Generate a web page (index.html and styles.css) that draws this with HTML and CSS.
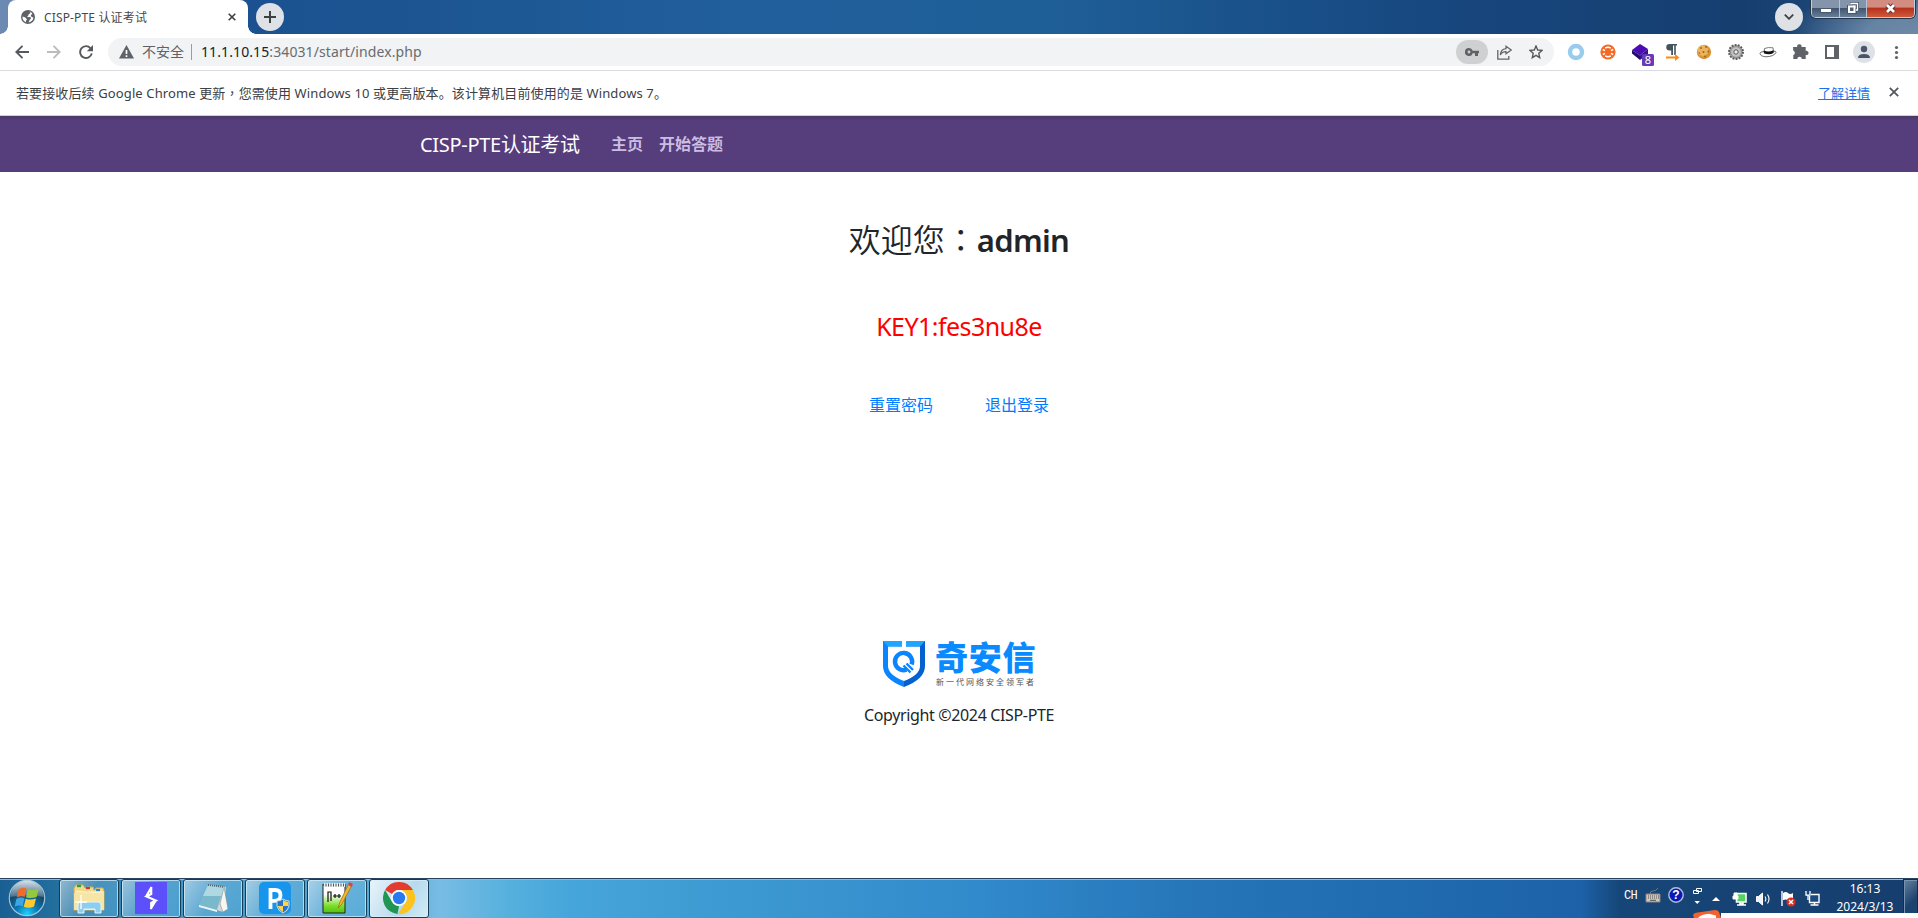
FILE: index.html
```
<!DOCTYPE html>
<html lang="zh-CN">
<head>
<meta charset="utf-8">
<title>CISP-PTE 认证考试</title>
<link rel="stylesheet" href="styles.css">
</head>
<body>
<div class="screen">
  <header class="titlebar">
    <div class="tab">
      <svg class="globe" width="14" height="14" viewBox="0 0 14 14"><circle cx="7" cy="7" r="7" fill="#5f6368"/><path d="M7.6 1.6 9.6 1.8 9 3.6 7.4 4.4 7.4 5.6 6 6.4 7.8 7.2 9.4 6.8 10 8.4 8.6 10 7.6 12.4A5.5 5.5 0 0 0 12.4 7.6L10.6 7 9.8 5.2 11.4 3.6A5.6 5.6 0 0 0 7.6 1.6Z" fill="#fff"/><path d="M1.5 6.6 4.4 7.6 6 9.4 5 10.6 5 12.2A5.6 5.6 0 0 1 1.5 6.6Z" fill="#fff"/></svg>
      <span class="tab-title">CISP-PTE 认证考试</span>
      <svg class="tab-close" width="8" height="8" viewBox="0 0 8 8"><path d="M.7.7 7.3 7.3M7.3.7.7 7.3" stroke="#3c4043" stroke-width="1.6"/></svg>
    </div>
    <div class="round-btn"><svg width="12" height="12" viewBox="0 0 12 12"><path d="M6 0V12M0 6H12" stroke="#3c4043" stroke-width="2"/></svg></div>
    <div class="round-btn search-tabs"><svg width="10" height="6" viewBox="0 0 10 6"><path d="M.8.6 5 4.8 9.2.6" fill="none" stroke="#3c4043" stroke-width="1.8"/></svg></div>
    <div class="win-buttons">
      <div class="win-btn"><svg width="12" height="5" viewBox="0 0 12 5"><rect x=".5" y=".5" width="11" height="4" fill="#fff" stroke="#4d5a6d"/></svg></div>
      <div class="win-btn restore"><svg width="12" height="12" viewBox="0 0 12 12"><path d="M4.5 1.5h6v6h-2v3h-7v-6h3Z" fill="none" stroke="#4a5568" stroke-width="3"/><path d="M4 2.5V1.5h6.5V8H9" fill="none" stroke="#fff" stroke-width="1.3"/><rect x="2" y="4.5" width="5.5" height="5.5" fill="#566276" stroke="#fff" stroke-width="2"/></svg></div>
      <div class="win-btn close"><svg width="13" height="11" viewBox="0 0 13 11"><path d="M3 2 10 9M10 2 3 9" stroke="#5b3338" stroke-width="4.6"/><path d="M3 2 10 9M10 2 3 9" stroke="#fff" stroke-width="2.8"/></svg></div>
    </div>
  </header>

  <div class="toolbar">
    <div class="nav-icons">
      <svg width="14" height="14" viewBox="0 0 14 14"><path d="M14 7H1.5M7.5 .8 1.3 7l6.2 6.2" fill="none" stroke="#55595e" stroke-width="1.9"/></svg>
      <svg width="14" height="14" viewBox="0 0 14 14"><path d="M0 7H12.5M6.5 .8 12.7 7l-6.2 6.2" fill="none" stroke="#babcbe" stroke-width="1.9"/></svg>
      <svg width="14" height="14" viewBox="0 0 14 14"><path d="M11.6 3.3A5.9 5.9 0 1 0 12.8 8.4" fill="none" stroke="#55595e" stroke-width="1.9"/><path d="M14 0V6.2H7.8Z" fill="#55595e"/></svg>
    </div>
    <div class="omnibox">
      <svg width="15" height="14" viewBox="0 0 15 14"><path d="M7.5 0 15 13.5H0Z" fill="#5f6368"/><path d="M7.5 5V9M7.5 10.2V12" stroke="#fff" stroke-width="1.7"/></svg>
      <span class="insecure">不安全</span>
      <i class="divider"></i>
      <span class="url"><b>11.1.10.15</b>:34031/start/index.php</span>
      <div class="omni-actions">
        <span class="key"><svg width="14" height="8" viewBox="0 0 14 8"><path d="M4 0A4 4 0 1 0 7.7 5.2H10V8H13V5.2H14V2.8H7.7A4 4 0 0 0 4 0ZM4 2.6A1.4 1.4 0 1 1 4 5.4 1.4 1.4 0 0 1 4 2.6Z" fill="#5f6368" fill-rule="evenodd"/></svg></span>
        <svg class="share" width="15" height="15" viewBox="0 0 15 15"><path d="M.8 5V14.2H11.8V11" fill="none" stroke="#62666b" stroke-width="1.3"/><path d="M9 1.2 14.2 5 9 8.8V6.6C6 6.5 4.5 7.8 3.3 10 3.5 6.6 5.6 4 9 3.6Z" fill="none" stroke="#62666b" stroke-width="1.2"/></svg>
        <svg class="star" width="14" height="14" viewBox="0 0 14 14"><path d="M7 1 8.7 5 13 5.4 9.8 8.3 10.7 12.7 7 10.4 3.3 12.7 4.2 8.3 1 5.4 5.3 5Z" fill="none" stroke="#55595e" stroke-width="1.4"/></svg>
      </div>
    </div>
    <div class="extensions">
      <svg viewBox="0 0 32 32"><circle cx="16" cy="16" r="6" fill="none" stroke="#99cbef" stroke-width="4.4"/></svg>
      <svg viewBox="0 0 32 32"><circle cx="16" cy="16" r="7.6" fill="#f46a25"/><g fill="none" stroke="#fff" stroke-width="1.5"><path d="M13.2 12.2Q16 10.5 18.8 12.2M13.2 19.8Q16 21.5 18.8 19.8"/><path d="m10.8 13.5 2.2 1.2M21.2 13.5 19 14.7M10.8 18.5l2.2-1.2M21.2 18.5 19 17.3"/></g></svg>
      <svg viewBox="0 0 32 32"><path d="M16 8 24 13 16 19.5 8 14Z" fill="#4b0db3"/><path d="M8 14 16 19.5V24L8 17.5Z" fill="#21106b"/><path d="M16 19.5 24 13v5l-8 6Z" fill="#35108b"/><rect x="18" y="18" width="12" height="12" rx="1.5" fill="#673ab7"/><text x="24" y="28" class="badge-text">8</text></svg>
      <svg viewBox="0 0 32 32"><path d="M13.5 8H21V9.5H19.8V19H18.2V9.5H17V19H15.2V14.5H13.5A3.25 3.25 0 0 1 13.5 8Z" fill="#44545c"/><path d="M10 21.5H20" stroke="#ff8a0c" stroke-width="2"/><path d="m19 18 4.5 3.5L19 25Z" fill="#ff8a0c"/></svg>
      <svg viewBox="0 0 32 32"><circle cx="16" cy="16" r="7.2" fill="#dc9438"/><circle cx="15" cy="14.5" r="5.4" fill="#edb45e"/><g fill="#9a5f25"><circle cx="13" cy="12" r=".9"/><circle cx="18" cy="11" r=".9"/><circle cx="20.3" cy="15.5" r=".9"/><circle cx="15.5" cy="16" r="1"/><circle cx="11.5" cy="17" r=".8"/><circle cx="17" cy="20.5" r=".9"/></g></svg>
      <svg viewBox="0 0 32 32"><circle cx="16" cy="16" r="7" fill="#aaa" stroke="#5c5c5c" stroke-width="2" stroke-dasharray="1.9 1.24"/><circle cx="16" cy="16" r="5.4" fill="#c4c4c4" stroke="#8b8b8b"/><circle cx="16" cy="16" r="2.2" fill="#eee" stroke="#555"/></svg>
      <svg viewBox="0 0 32 32"><path d="M8 17.5Q8 15.5 12 15.5L21 15Q24.5 15 24 16.5 22 20.5 14 20.8 8.5 20.5 8 17.5Z" fill="#fff" stroke="#444" stroke-width=".8"/><path d="M12 16 12.5 12.5Q16 11 21 11.8L21.6 16Q17 18.5 12 16Z" fill="#fff" stroke="#444" stroke-width=".7"/><path d="M12 14.5Q16.5 16.5 21.3 14.2L21.6 17Q17 19.5 11.8 17.3Z" fill="#111"/></svg>
      <svg viewBox="0 0 32 32"><path d="M9 11H13.2A2.2 2.2 0 1 1 17.5 11H21.7V14.8A2.2 2.2 0 1 1 21.7 19V23H17.8A2.2 2.2 0 0 0 13.3 23H9.3V19A2.2 2.2 0 0 0 9.3 14.8Z" fill="#5f6368"/></svg>
      <svg viewBox="0 0 32 32"><path d="M9 9H23V23H9ZM11 11V21H18V11Z" fill="#5f6368" fill-rule="evenodd"/></svg>
      <svg viewBox="0 0 32 32"><circle cx="16" cy="16" r="11" fill="#dee1e6"/><circle cx="16" cy="13" r="3.2" fill="#4b566a"/><path d="M10 22Q10 18 16 18T22 22Z" fill="#4b566a"/></svg>
      <svg viewBox="0 0 32 32"><g fill="#5f6368"><circle cx="16.5" cy="11.5" r="1.6"/><circle cx="16.5" cy="16.5" r="1.6"/><circle cx="16.5" cy="21.5" r="1.6"/></g></svg>
    </div>
  </div>

  <div class="infobar">
    <span class="info-text">若要接收后续 Google Chrome 更新<span class="mid" lang="zh-Hant">，</span>您需使用 Windows 10 或更高版本。该计算机目前使用的是 Windows 7。</span>
    <a class="info-link">了解详情</a>
    <svg width="10" height="10" viewBox="0 0 10 10"><path d="M.8.8 9.2 9.2M9.2.8.8 9.2" stroke="#55595e" stroke-width="1.8"/></svg>
  </div>

  <nav class="navbar">
    <a class="brand">CISP-PTE认证考试</a>
    <a class="nav-link">主页</a>
    <a class="nav-link">开始答题</a>
  </nav>

  <main class="page">
    <h2 class="welcome"><span>欢迎您<span class="mid" lang="zh-Hant">：</span></span><b>admin</b></h2>
    <p class="flag">KEY1:fes3nu8e</p>
    <div class="links"><a>重置密码</a><a>退出登录</a></div>
    <div class="logo">
      <svg width="42" height="46" viewBox="0 0 42 46"><path d="M0 0H19V5.5H5V25Q5 34 21 40V46Q0 38 0 25Z" fill="#0a84ff"/><path d="M42 0H23V5.5H37V25Q37 34 21 40V46Q42 38 42 25Z" fill="#0560d0"/><path d="M0 0H19V5.5H5ZM42 0H23V5.5H37Z" fill="#1ea5ff"/><path d="M23.5 28.6A8.6 8.6 0 1 1 28.6 23.5" fill="none" stroke="#0a84ff" stroke-width="4.4"/><path d="m23.5 22.5 6.5 6.5M20.5 24.5 27.5 31.5" stroke="#0a84ff" stroke-width="2.4"/></svg>
      <div class="logo-words"><span class="logo-name">奇安信</span><span class="logo-sub">新一代网络安全领军者</span></div>
    </div>
    <p class="copyright">Copyright ©2024 CISP-PTE</p>
  </main>

  <footer class="taskbar">
    <svg class="start" width="38" height="38" viewBox="0 0 38 38">
      <defs><radialGradient id="orb" cx=".5" cy=".95" r=".9"><stop offset="0" stop-color="#20d4ff"/><stop offset=".35" stop-color="#0878b5"/><stop offset=".7" stop-color="#174869"/><stop offset="1" stop-color="#5f7f96"/></radialGradient><linearGradient id="gloss" x2="0" y2="1"><stop stop-color="#d6e0e8"/><stop offset="1" stop-color="#87a1b4" stop-opacity=".45"/></linearGradient></defs>
      <circle cx="19" cy="19" r="17.7" fill="url(#orb)" stroke="#9cc3d6" stroke-width="1.2"/><path d="M2.5 18A16.5 16.5 0 0 1 35.5 18Q19 14 2.5 18Z" fill="url(#gloss)"/>
      <path d="M10.5 10.5Q14 7.5 18.5 9.5L16.8 17.7Q12.5 16.3 8.7 18.5Z" fill="#f16b2b"/><path d="M19.8 10.2Q24 12 30.7 9.8L28.7 18Q23 20 18 18.2Z" fill="#94c93d"/><path d="M8.3 20Q12.3 17.5 16.4 19.3L14.6 27.2Q10.5 25.5 6.7 27.7Z" fill="#3fa5e5"/><path d="M17.7 19.7Q22.5 21.5 28 19.6L26 27.6Q20.5 30 15.8 27.8Z" fill="#fdc92f"/></svg>
    <div class="task"><svg viewBox="0 0 32 32"><path d="M1 6 3 3H10L12 6H13L14 5H20L21 8H22L23 6H30L31 9V28H1Z" fill="#f2d98c" stroke="#d3ad4e"/><path d="M2 10H31M2 9 13 10 31 11" stroke="#fff4c9"/><path d="M4 4h4" stroke="#29a329" stroke-width="2.4"/><path d="M13 6h4" stroke="#d13b25" stroke-width="2.2"/><path d="M23 8h4" stroke="#2d83cf" stroke-width="2.2"/><path d="M1 11H31V28H1Z" fill="#f7e5a5"/><path d="M5 31V23Q5 20 8 20H25Q28 20 28 23V31H22V27H11V31Z" fill="#8fcdee" stroke="#e1f5fd"/><path d="M8 13v14M2 20h12" stroke="#fff" stroke-width="1.3"/></svg></div>
    <div class="task"><svg viewBox="0 0 32 32"><path d="M0 0H32V32H0Z" fill="#5c50fa"/><path d="M16.2 5V12L11.5 14.5 20.8 18.5 16.2 21V27M16.6 5 11.2 14.2M20.8 18.4 15.6 27" fill="none" stroke="#fff" stroke-width="2.2"/></svg></div>
    <div class="task"><svg viewBox="0 0 32 32"><path d="M12 3 29 5 26 30 20 28Z" fill="#d4d8d8"/><path d="m27 5 4 22-5 3-3-8Z" fill="#f7f7f2" stroke="#888" stroke-width=".6"/><path d="M11 3 27 5 20 28 2 23Z" fill="#7ab9cc"/><path d="M11 3 27 5 24 14 6 14Z" fill="#aed8e2"/><path d="m2 23 18 5v2L2 25Z" fill="#eff5f6"/><path d="M11 3 27 5" stroke="#56656b" stroke-width="2" stroke-dasharray="1 1"/></svg></div>
    <div class="task"><svg viewBox="0 0 32 32"><rect width="32" height="32" rx="5" fill="#1795ec"/><path d="M11.5 27V8H16Q21.5 8 21.5 13.2T16 18.8H11.5" fill="none" stroke="#fff" stroke-width="3.8"/><path d="M24 17Q27 19 30 19V24Q29 29 24 31 19 29 18 24V19Q21 19 24 17Z" fill="#2276cc" stroke="#ddd"/><path d="M24 18Q27 20 29.3 20V24H24ZM18.7 24H24V30Q20 28 18.7 24Z" fill="#ffd34b"/></svg></div>
    <div class="task"><svg viewBox="0 0 32 32"><defs><linearGradient id="leaf" x2="0" y2="1"><stop offset=".35" stop-color="#fff"/><stop offset=".75" stop-color="#7bdf29"/><stop offset="1" stop-color="#54bf12"/></linearGradient></defs><path d="M2 2H24V31H2Z" fill="url(#leaf)" stroke="#222"/><path d="M2 3H24" stroke="#eee" stroke-width="4"/><path d="M2 3H24" stroke="#555" stroke-width="3" stroke-dasharray="1 1.5"/><path d="M7 20V10h3v9M12 14h4M14 12v4M16 14h4M18 12v4" fill="none" stroke="#111" stroke-width="1.2"/><path d="m17 26 2-6 9-19 3 2-10 19Z" fill="#f2b531" stroke="#a3661a" stroke-width=".7"/><path d="m27 3 1.5-3L32 2l-1.5 3Z" fill="#c64b61"/></svg></div>
    <div class="task active"><svg viewBox="0 0 32 32"><path d="M2.14 8A16 16 0 0 1 29.86 8H16A8 8 0 0 0 9.07 12Z" fill="#e33b2e"/><path d="M2.14 8 9.07 20A8 8 0 0 0 16 24L14.5 32A16 16 0 0 1 2.14 8Z" fill="#219653"/><path d="M29.86 8A16 16 0 0 1 15 32L22.93 20A8 8 0 0 0 16 8Z" fill="#fcc31e"/><circle cx="16" cy="16" r="7.9" fill="#fff"/><circle cx="16" cy="16" r="6.2" fill="#2b79ee"/></svg></div>
    <div class="tray">
      <span class="lang">CH</span>
      <svg class="ic-kb" width="16" height="15" viewBox="0 0 16 15"><path d="M5 6Q5 3 8 3T13 0" fill="none" stroke="#777"/><path d="M1 6H15V14H1Z" fill="#ccc9c0" stroke="#85827c"/><path d="M3 8H14M3 10H14" stroke="#514f4c" stroke-dasharray="1 1"/><path d="M5 12.3H11" stroke="#514f4c"/></svg>
      <svg class="ic-help" width="16" height="16" viewBox="0 0 16 16"><circle cx="8" cy="8" r="7.2" fill="#0a18b6" stroke="#b5bdd8" stroke-width="1.4"/><text x="8" y="12.4" class="help-text">?</text></svg>
      <svg class="ic-stack" width="9" height="17" viewBox="0 0 9 17"><path d="M3.5 1.5H8.5V4.5H3.5ZM.5 3.5H5.5V6.5H.5Z" fill="#174477" stroke="#fff"/><path d="M1.5 14H7L4.2 17Z" fill="#fff"/></svg>
      <svg class="ic-up" width="8" height="4" viewBox="0 0 8 4"><path d="M0 4 4 0 8 4Z" fill="#fff"/></svg>
      <svg class="ic-vm" width="15" height="14" viewBox="0 0 15 14"><path d="M4.5 1.5H14V10H4.5ZM8 10h3v2H8ZM5 13H14" fill="#55d260" stroke="#fff" stroke-width="1.6"/><path d="M1 4H6V7H1ZM2 4V1H5V4" fill="#fff" stroke="#fff"/></svg>
      <svg class="ic-vol" width="15" height="14" viewBox="0 0 15 14"><path d="M.5 4.5H2.5L6.5 1V13L2.5 9.5H.5Z" fill="#eef2f6" stroke="#fff"/><path d="M9 4.5Q10.7 7 9 9.5M11.5 2.5Q14.5 7 11.5 11.5" fill="none" stroke="#fff" stroke-width="1.1"/></svg>
      <svg class="ic-flag" width="15" height="16" viewBox="0 0 15 16"><path d="M1 0V15" stroke="#fff" stroke-width="1.4"/><path d="M2 2Q5 0 7 2T12 2V9Q9 10 7 9T2 9Z" fill="#fff"/><circle cx="10" cy="11" r="4.6" fill="#d72e20"/><path d="m8 9 4 4M12 9l-4 4" stroke="#fff" stroke-width="1.5"/></svg>
      <svg class="ic-net" width="15" height="15" viewBox="0 0 15 15"><path d="M4.5 3.5H14V11.5H4.5ZM9.5 12V14M5.5 14H13.5" fill="#1b4a80" stroke="#fff" stroke-width="1.4"/><path d="M0 0H6V5H0Z" fill="#1b4a80"/><path d="M1 0V4.2H5V0M3 4V9" fill="none" stroke="#fff" stroke-width="1.3"/></svg>
      <div class="clock"><span>16:13</span><span>2024/3/13</span></div>
      <div class="show-desktop"></div>
    </div>
    <div class="overlay"><svg width="28" height="8" viewBox="0 0 28 8"><path d="M0 5Q1 3 3 2.8L22 0Q25 0 26 2L28 8H1Z" fill="#f2622d"/><path d="M5 8Q8 4.2 16 3.8L23 5.5V8Z" fill="#fff"/></svg><i></i></div>
  </footer>
</div>
</body>
</html>
```
FILE: styles.css
```
* { box-sizing: border-box; }
html, body { height: 918px; overflow: hidden; }
body { margin: 0; font-family: "Noto Sans", "Noto Sans CJK SC", sans-serif; color: #212529; }
svg { display: block; flex: none; }
p, h2 { margin: 0; }
span, a { white-space: nowrap; }
.mid { font-family: "Noto Sans CJK TC", sans-serif; line-height: 1; }
.screen { width: 1918px; height: 918px; display: flex; flex-direction: column; background: #fff; overflow: hidden; }
.screen > * { flex: none; }

.titlebar { height: 34px; display: flex; padding-left: 8px; background: radial-gradient(ellipse 130px 50px at 1918px 34px, #6e89a5 0, #6583a3 40%, rgba(64,103,146,0) 100%), linear-gradient(90deg, #6d8ab3 0, #1b5190 240px, #1c5592 430px, #215f9c 740px, #1f5f98 1040px, #194f88 1300px, #17457c 1480px, #163f70 1740px, #234d7d 1918px); }
.tab { width: 240px; height: 34px; background: #fff; border-radius: 8px 8px 0 0; display: flex; align-items: center; padding: 0 12px 0 13px; position: relative; }
.tab::before, .tab::after { content: ""; position: absolute; bottom: 0; width: 8px; height: 8px; }
.tab::before { left: -8px; background: radial-gradient(circle at 0 0, transparent 7.5px, #fff 8px); }
.tab::after { right: -8px; background: radial-gradient(circle at 100% 0, transparent 7.5px, #fff 8px); }
.tab-title { font-size: 12px; color: #45494d; margin: 0 auto 0 9px; letter-spacing: 0.15px; }
.round-btn { width: 28px; height: 28px; margin: 3px 0 0 8px; border-radius: 50%; background: #dee1e6; display: flex; align-items: center; justify-content: center; }
.search-tabs { margin-left: auto; margin-right: 8px; }
.win-buttons { width: 104px; height: 18px; margin-right: 3px; display: flex; border: 1px solid #c4ced9; border-top: 0; border-radius: 0 0 5px 5px; overflow: hidden; box-shadow: 0 0 0 1px #26364a; }
.win-btn { width: 28px; display: flex; align-items: center; justify-content: center; background: linear-gradient(#8494aa 0 45%, #42556f 50%, #667e9a); border-right: 1px solid #b6c2cf; padding-top: 4px; }
.restore { width: 27px; padding: 0 0 1px; }
.close { width: 47px; background: linear-gradient(#d28c80 0 40%, #b83220 50%, #cf5a38); border: 0; padding: 0 0 1px; }

.toolbar { height: 37px; display: flex; align-items: center; border-bottom: 1px solid #dadce0; background: #fff; }
.nav-icons { width: 108px; padding-left: 15px; display: flex; gap: 18px; }
.omnibox { width: 1446px; height: 28px; border-radius: 14px; background: #f1f3f4; display: flex; align-items: center; padding-left: 11px; font-size: 14px; }
.insecure, .url { padding-bottom: 2px; }
.insecure { color: #5f6368; margin-left: 8px; }
.divider { width: 1px; height: 16px; background: #9a9da1; margin: 0 9px 0 7px; }
.url { color: #686c70; letter-spacing: 0.1px; }
.url b { font-weight: 400; color: #202124; }
.omni-actions { margin-left: auto; display: flex; align-items: center; padding-right: 11px; }
.key { width: 32px; height: 24px; border-radius: 12px; background: #cfd0d2; display: flex; align-items: center; justify-content: center; }
.share { margin-left: 9px; }
.star { margin-left: 17px; }
.extensions { display: flex; margin-left: 6px; }
.extensions svg { width: 32px; height: 32px; }
.badge-text { font: 11px "Noto Sans", sans-serif; fill: #fff; text-anchor: middle; }

.infobar { height: 45px; display: flex; align-items: center; padding: 0 19px 2px 16px; font-size: 13px; border-bottom: 1px solid #d0d4d4; }
.info-text { color: #3c4043; letter-spacing: 0.12px; }
.info-link { margin-left: auto; margin-right: 19px; color: #1a73e8; text-decoration: underline; }

.navbar { height: 56px; background: linear-gradient(#4a3866 0, #563d7c 4px); display: flex; align-items: center; padding: 0 0 2px 420px; }
.brand { color: #fff; font-size: 20px; letter-spacing: -0.3px; width: 191px; }
.nav-link { color: #cbbde2; font-size: 16px; font-weight: 700; margin-right: 16px; }

.page { height: 706px; display: flex; flex-direction: column; align-items: center; }
.welcome { margin-top: 44px; height: 48px; line-height: 48px; font-size: 32px; font-weight: 350; }
.welcome b { font-weight: 600; font-size: 31px; letter-spacing: -0.7px; }
.flag { margin-top: 44px; height: 36px; line-height: 36px; font-size: 25px; color: #f00; letter-spacing: -0.55px; }
.links { margin-top: 48px; height: 26px; line-height: 26px; display: flex; gap: 52px; color: #007bff; font-size: 16px; }
.logo { margin-top: 223px; height: 47px; display: flex; gap: 10px; width: 152px; }
.logo-words { display: flex; flex-direction: column; }
.logo-name { font-size: 33px; line-height: 33px; height: 35px; font-weight: 900; color: #0a8aff; letter-spacing: 0.7px; }
.logo-sub { font-size: 8px; line-height: 12px; letter-spacing: 2px; color: #555; padding-left: 1px; }
.copyright { margin-top: 15px; font-size: 16px; line-height: 24px; letter-spacing: -0.35px; }

.taskbar { height: 40px; position: relative; display: flex; align-items: flex-start; border-top: 1px solid #26445f; box-shadow: inset 0 1px #7fc0e4; background: linear-gradient(90deg, #1a5f93 0, #23709f 60px, #3d93c5 150px, #5badd9 400px, #78bce4 440px, #55b0dd 510px, #46a5da 570px, #3d99d1 740px, #318acb 980px, #2575b8 1200px, #1d62a9 1580px, #164678 1620px, #163e6e 1918px); }
.start { margin: 0 13px 0 8px; }
.task { width: 60px; height: 39px; margin-right: 2px; border: 1px solid #163d54; border-radius: 3px; box-shadow: inset 0 0 0 1px rgba(220,240,250,.7); background: linear-gradient(120deg, rgba(255,255,255,.5), rgba(180,220,242,.2) 50%, rgba(90,175,220,.35)); display: flex; justify-content: center; padding-top: 2px; }
.task svg { width: 32px; height: 32px; }
.active { background: linear-gradient(120deg, #eaf4fa, #b5daed 60%, #d3ebf6); }
.tray { margin-left: auto; display: flex; align-items: flex-start; color: #fff; }
.lang { font: 12px/16px "Liberation Mono", monospace; margin: 9px 8px 0 0; letter-spacing: -0.7px; }
.ic-kb { margin-top: 9px; }
.ic-help { margin: 8px 0 0 7px; }
.help-text { font: bold 12px "Liberation Sans", sans-serif; fill: #fff; text-anchor: middle; }
.ic-stack { margin: 8px 0 0 9px; }
.ic-up { margin: 18px 0 0 10px; }
.ic-vm { margin: 13px 0 0 12px; }
.ic-vol { margin: 13px 0 0 9px; }
.ic-flag { margin: 12px 0 0 10px; }
.ic-net { margin: 12px 0 0 9px; }
.clock { width: 64px; margin: 1px 6px 0 13px; display: flex; flex-direction: column; align-items: center; font-size: 12px; line-height: 17.5px; }
.show-desktop { width: 15px; height: 39px; border: 1px solid #102d4d; box-shadow: inset 1px 1px #7592b0; background: linear-gradient(135deg, #68829e, #1c426e 60%); }
.overlay { position: absolute; left: 1693px; right: 0; bottom: 0; height: 8px; display: flex; align-items: flex-end; }
.overlay i { height: 5px; flex: 1; background: #fff; }
```
